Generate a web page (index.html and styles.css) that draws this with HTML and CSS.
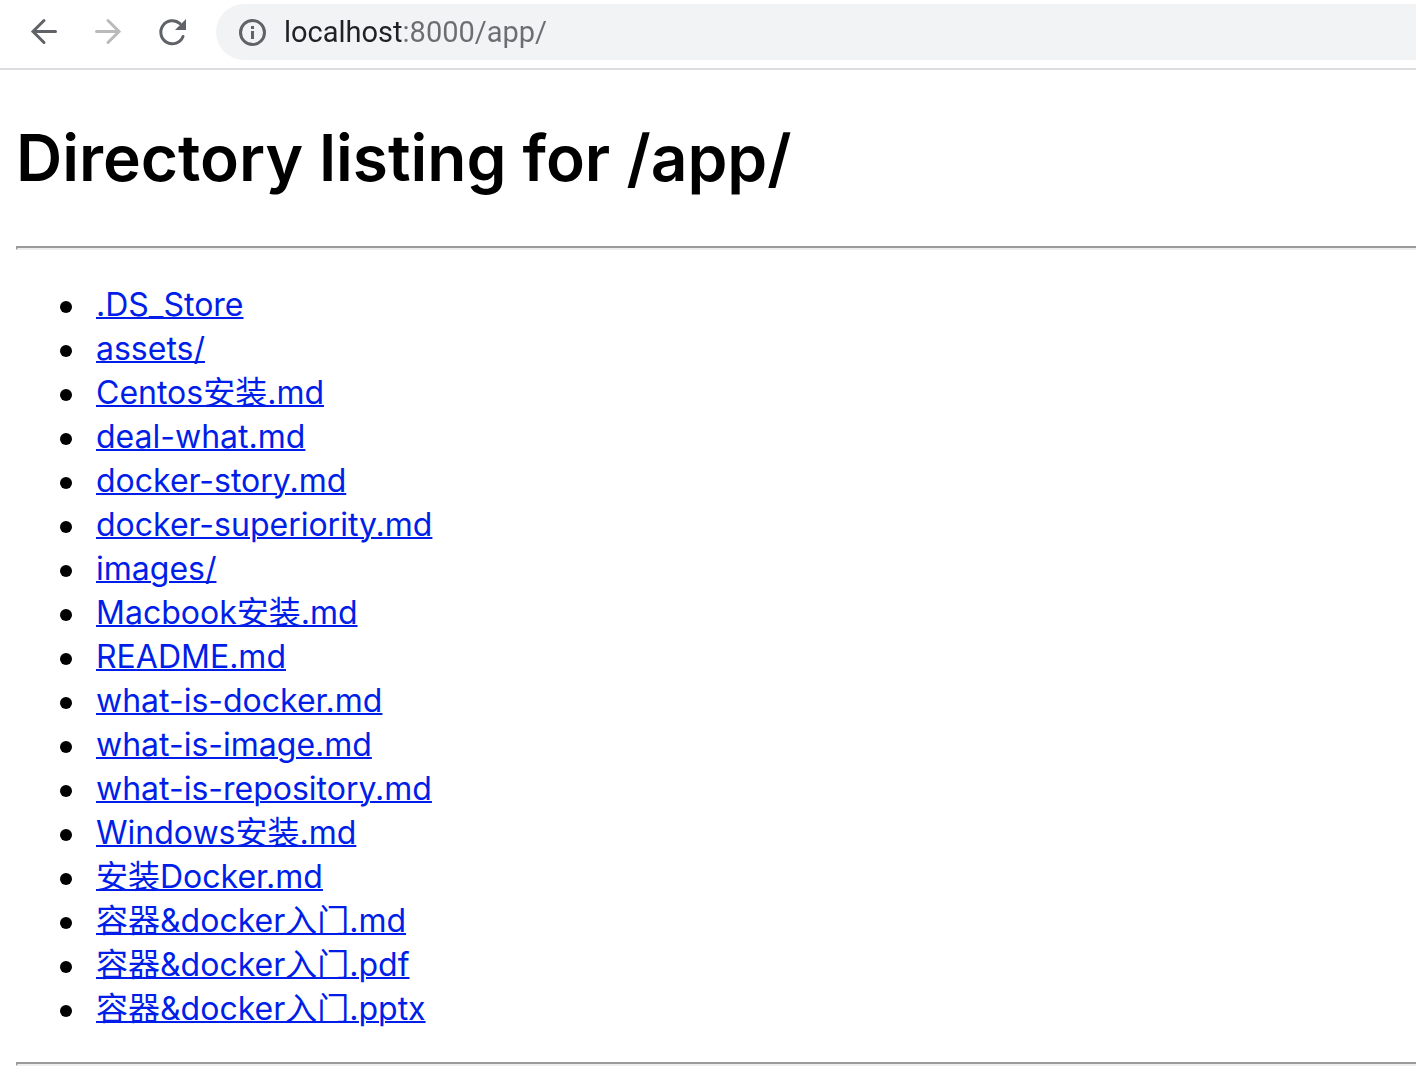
FILE: index.html
```html
<!DOCTYPE html>
<html lang="zh-CN">
<head>
<meta charset="utf-8">
<title>Directory listing for /app/</title>
<link rel="stylesheet" href="styles.css">
</head>
<body>
<header class="toolbar">
  <nav class="nav-buttons" aria-label="Navigation">
    <button class="nav-button" type="button" aria-label="Back">
      <svg viewBox="0 0 32 32" width="32" height="32" fill="none" stroke="#5f6368" stroke-width="3" stroke-linecap="round" stroke-linejoin="miter"><path d="M27.500 15.500H5M16 4.500L5 15.500L16 26.500"/></svg>
    </button>
    <button class="nav-button" type="button" aria-label="Forward" disabled>
      <svg viewBox="0 0 32 32" width="32" height="32" fill="none" stroke="#bababa" stroke-width="3" stroke-linecap="round" stroke-linejoin="miter"><path d="M4.500 15.500H27M16 4.500L27 15.500L16 26.500"/></svg>
    </button>
    <button class="nav-button" type="button" aria-label="Reload">
      <svg viewBox="0 0 32 32" width="32" height="32"><path d="M27 20.500A11.500 11.500 0 1 1 24 7.700" fill="none" stroke="#5f6368" stroke-width="3" stroke-linecap="round"/><path d="M30 3V14H19Z" fill="#5f6368"/></svg>
    </button>
  </nav>
  <form class="address-bar">
    <svg class="info" viewBox="0 0 28 28" width="28" height="28" aria-hidden="true"><circle cx="14.500" cy="14.500" r="12" fill="none" stroke="#5f6368" stroke-width="3"/><path d="M13 8h3v3h-3zM13 13h3v8h-3z" fill="#5f6368"/></svg>
    <input class="address" type="text" aria-label="Address" value="localhost:8000/app/" spellcheck="false">
  </form>
</header>
<main class="listing">
  <h1 class="title">Directory listing for /app/</h1>
  <hr class="rule">
  <ul class="files">
    <li><a href="#">.DS_Store</a></li>
    <li><a href="#">assets/</a></li>
    <li><a href="#">Centos安装.md</a></li>
    <li><a href="#">deal-what.md</a></li>
    <li><a href="#">docker-story.md</a></li>
    <li><a href="#">docker-superiority.md</a></li>
    <li><a href="#">images/</a></li>
    <li><a href="#">Macbook安装.md</a></li>
    <li><a href="#">README.md</a></li>
    <li><a href="#">what-is-docker.md</a></li>
    <li><a href="#">what-is-image.md</a></li>
    <li><a href="#">what-is-repository.md</a></li>
    <li><a href="#">Windows安装.md</a></li>
    <li><a href="#">安装Docker.md</a></li>
    <li><a href="#">容器&amp;docker入门.md</a></li>
    <li><a href="#">容器&amp;docker入门.pdf</a></li>
    <li><a href="#">容器&amp;docker入门.pptx</a></li>
  </ul>
  <hr class="rule">
</main>
</body>
</html>
```
FILE: styles.css
```css
body {
  margin: 0;
  background: #fff;
  color: #000;
  font-family: Inter, "Noto Sans CJK SC", sans-serif;
  font-size: 32px;
  line-height: 44px;
}

.toolbar {
  display: flex;
  gap: 28px;
  padding: 4px 0 8px 28px;
  border-bottom: 2px solid #dadce0;
}

.nav-buttons {
  display: flex;
  align-items: center;
  gap: 32px;
}

.nav-button {
  display: flex;
  padding: 0;
  border: 0;
  background: none;
}

.address-bar {
  display: flex;
  flex: 1;
  align-items: center;
  gap: 18px;
  height: 56px;
  padding-left: 22px;
  border-radius: 28px 0 0 28px;
  background: #f1f3f4;
}

.info {
  flex: none;
}

/* The host name is dark, the port and path after it are gray. */
.address {
  flex: 1;
  min-width: 0;
  padding: 0;
  border: 0;
  outline: 0;
  background: linear-gradient(to right, #202124 119px, #6b6d70 119px);
  background-clip: text;
  -webkit-background-clip: text;
  -webkit-text-fill-color: transparent;
  color: #202124;
  font: 29px/40px Roboto, sans-serif;
}

.listing {
  padding-left: 16px;
}

.title {
  margin: 43px 0;
  font-size: 64px;
  font-weight: 600;
  line-height: 90px;
}

.rule {
  margin: 0;
  border: 2px solid;
  border-color: #9a9a9a #eee #eee #9a9a9a;
  border-right: 0;
}

.files {
  margin: 33px 0 31px;
  padding-left: 80px;
  list-style: none;
}

.files li {
  height: 44px;
}

.files li::before {
  content: "";
  display: inline-block;
  width: 12px;
  height: 12px;
  margin: 0 24px 0 -36px;
  border-radius: 50%;
  background: #000;
  vertical-align: middle;
}

.files a {
  color: #001ee8;
  text-decoration-thickness: 2px;
}
```
